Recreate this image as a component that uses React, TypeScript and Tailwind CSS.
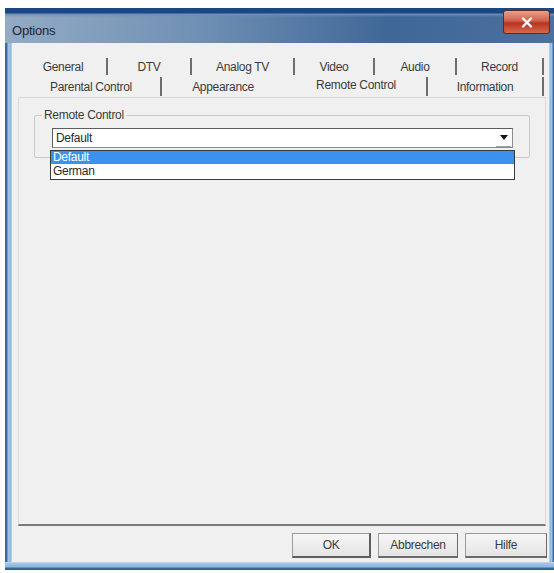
import React from 'react';

const topTabs = [
  { label: 'General', w: 'w-[88px]' },
  { label: 'DTV', w: 'w-[84px]' },
  { label: 'Analog TV', w: 'w-[103px]' },
  { label: 'Video', w: 'w-[80px]' },
  { label: 'Audio', w: 'w-[82px]' },
  { label: 'Record', w: 'w-[87px]' },
];

const bottomTabs = [
  { label: 'Parental Control', w: 'w-[140px]', sep: true },
  { label: 'Appearance', w: 'w-[124px]', sep: false },
  { label: 'Remote Control', w: 'w-[142px]', sep: true, active: true },
  { label: 'Information', w: 'w-[116px]', sep: true },
];

const buttons = [
  { label: 'OK', w: 'w-[79px]', main: true },
  { label: 'Abbrechen', w: 'w-[80px]' },
  { label: 'Hilfe', w: 'w-[82px]' },
];

const App: React.FC = () => {
  return (
    <div className="w-[554px] h-[573px] bg-white overflow-hidden pt-[8px] pl-[5px] font-['Liberation_Sans',Arial,sans-serif]">
      <div className="w-[549px] flex flex-col">
        {/* Title bar */}
        <div className="h-[35px] flex items-start bg-[linear-gradient(to_bottom,#1b4784_0px,#1b4784_5px,#6f8fb3_6px,transparent_9px),linear-gradient(to_right,#93abc4_0%,#7090b4_35%,#3f6797_70%,#4a71a0_100%)]">
          <span className="ml-[7px] mt-[15px] text-[13px] leading-[16px] tracking-[-0.2px] text-[#1c2633]">Options</span>
          <div className="ml-auto mr-[4px] mt-[2px] w-[47px] h-[24px] rounded-[3px] border border-[#5a2a25] bg-[linear-gradient(to_bottom,#e6a393_0%,#d0604a_45%,#b8321f_55%,#d46a4f_100%)] flex items-center justify-center">
            <svg width="12" height="11" viewBox="0 0 12 11">
              <path d="M2 1.5 L10 9.5 M10 1.5 L2 9.5" stroke="#ffffff" strokeWidth="2.4" strokeLinecap="round" />
            </svg>
          </div>
        </div>

        <div className="flex">
          {/* left frame */}
          <div className="w-[7px] bg-[linear-gradient(to_right,#3a6aa2_0px,#3a6aa2_2px,#a6c6e6_3px,#8fb6db_6px,#d6e6f4_7px)]" />

          {/* client area */}
          <div className="w-[537px] h-[519px] bg-[#f0f0f0] flex flex-col text-[12px] tracking-[-0.3px] text-[#3b3b3b]">
            {/* tab strip */}
            <div className="pt-[15px] pl-[8px] flex h-[32px]">
              {topTabs.map((t) => (
                <div key={t.label} className={`${t.w} h-[17px] flex items-center justify-center border-r-2 border-[#6d6d6d]`}>
                  <span className="leading-[14px]">{t.label}</span>
                </div>
              ))}
            </div>
            <div className="pl-[10px] flex h-[22px]">
              {bottomTabs.map((t) => (
                <div
                  key={t.label}
                  className={`${t.w} h-[19px] mt-[2px] flex justify-center ${t.sep ? 'border-r-2 border-[#6d6d6d]' : 'border-r-2 border-transparent'} ${t.active ? 'items-start pt-[1px]' : 'items-center'}`}
                >
                  <span className="leading-[14px]">{t.label}</span>
                </div>
              ))}
            </div>

            {/* tab page */}
            <div className="ml-[6px] mr-[3px] h-[429px] border border-[#d9d9d9] border-b-2 border-b-[#7a7a7a]">
              <fieldset className="ml-[15px] mt-[10px] w-[496px] border border-[#c9c9c9] rounded-[2px] pl-[17px] pr-[16px] pb-[9px]">
                <legend className="-ml-[10px] px-[2px] leading-[14px] text-[#3b3b3b]">Remote Control</legend>
                <div className="relative mt-[6px]">
                  <div className="h-[20px] bg-white border border-[#8a8a8a] border-t-[#5e5e5e] border-l-[#5e5e5e] flex items-center">
                    <span className="ml-[3px] leading-[14px] text-[#2a2a2a]">Default</span>
                    <div className="ml-auto mr-[1px] w-[15px] h-[17px] flex items-center justify-center border-b border-[#a0a0a0]">
                      <svg width="8" height="5" viewBox="0 0 8 5">
                        <path d="M0 0 L8 0 L4 5 Z" fill="#111" />
                      </svg>
                    </div>
                  </div>
                  {/* open dropdown list */}
                  <div className="absolute left-[-2px] top-[22px] w-[465px] bg-white border border-[#3a3a3a] flex flex-col">
                    <div className="h-[13px] bg-[#3a92ee] text-white flex items-center pl-[2px] leading-[13px]">Default</div>
                    <div className="h-[15px] flex items-center pl-[2px] leading-[13px] text-[#2a2a2a]">German</div>
                  </div>
                </div>
              </fieldset>
            </div>

            {/* dialog buttons */}
            <div className="mt-[7px] flex justify-end pr-[2px] gap-[7px]">
              {buttons.map((b) => (
                <div
                  key={b.label}
                  className={`${b.w} h-[25px] flex items-center justify-center bg-[linear-gradient(to_bottom,#f6f6f6,#e4e4e4)] border border-[#9a9a9a] ${b.main ? 'border-b-2 border-r-2 border-b-[#5e5e5e] border-r-[#5e5e5e]' : 'border-b-2 border-b-[#6a6a6a] border-r-[#6a6a6a]'} text-[#3b3b3b]`}
                >
                  {b.label}
                </div>
              ))}
            </div>
          </div>

          {/* right frame */}
          <div className="w-[5px] bg-[linear-gradient(to_right,#d6e6f4_0px,#8fb6db_1px,#a6c6e6_3px,#3a6aa2_4px)]" />
        </div>

        {/* bottom frame */}
        <div className="h-[8px] bg-[linear-gradient(to_bottom,#d6e6f4_0px,#a6c6e6_1px,#8fb6db_5px,#3a6aa2_6px,#2c5b94_8px)]" />
      </div>
    </div>
  );
};

export default App;
